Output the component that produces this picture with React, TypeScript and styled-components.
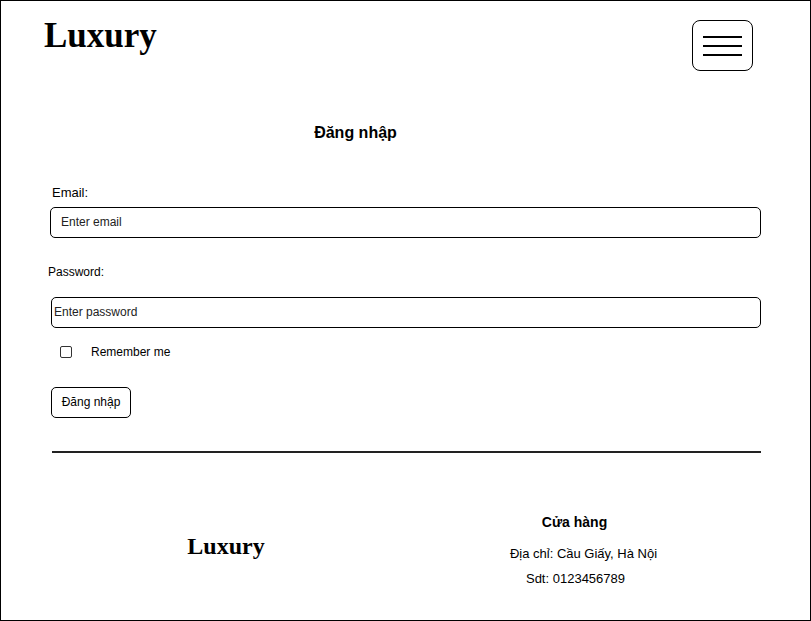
import React from "react";
import styled, { createGlobalStyle } from "styled-components";

const Global = createGlobalStyle`
  html, body { margin: 0; padding: 0; background: #fff; }
  body { font-family: "Liberation Sans", Arial, sans-serif; color: #000; }
  * { box-sizing: border-box; }
`;

const Frame = styled.div`
  width: 811px;
  height: 621px;
  border: 1px solid #000;
  display: flex;
  flex-direction: column;
  overflow: hidden;
`;

const Header = styled.header`
  display: flex;
  justify-content: space-between;
  align-items: flex-start;
  padding: 0 57px 0 43px;
`;

const Logo = styled.div<{ $size: number }>`
  font-family: "Liberation Serif", "Times New Roman", serif;
  font-weight: bold;
  font-size: ${(p) => p.$size}px;
  line-height: ${(p) => Math.round(p.$size * 1.15)}px;
`;

const HeaderLogo = styled(Logo)`
  margin-top: 15px;
`;

const MenuButton = styled.button`
  margin-top: 19px;
  width: 61px;
  height: 51px;
  border: 1px solid #000;
  border-radius: 8px;
  background: #fff;
  padding: 0;
  display: flex;
  flex-direction: column;
  align-items: center;
  justify-content: center;
  gap: 7px;
  cursor: pointer;
`;

const MenuLine = styled.span`
  display: block;
  width: 39px;
  height: 2px;
  background: #000;
`;

const Main = styled.main`
  padding: 0 49px 0 49px;
  display: flex;
  flex-direction: column;
`;

const Title = styled.h1`
  margin: 53px 0 0;
  padding-right: 100px;
  text-align: center;
  font-size: 16px;
  line-height: 18px;
  font-weight: bold;
`;

const Label = styled.label<{ $indent: number; $top: number; $size: number }>`
  display: block;
  margin-top: ${(p) => p.$top}px;
  margin-left: ${(p) => p.$indent}px;
  font-size: ${(p) => p.$size}px;
  line-height: ${(p) => p.$size + 2}px;
`;

const TextInput = styled.input<{ $indent: number; $top: number; $pad: number }>`
  display: block;
  margin-top: ${(p) => p.$top}px;
  margin-left: ${(p) => p.$indent}px;
  width: calc(100% - ${(p) => p.$indent}px);
  height: 31px;
  border: 1px solid #000;
  border-radius: 5px;
  padding: 0 ${(p) => p.$pad}px 1px;
  font-family: "Liberation Sans", Arial, sans-serif;
  font-size: 12px;
  color: #000;
  background: #fff;
  outline: none;
  &::placeholder { color: #222; opacity: 1; }
`;

const CheckRow = styled.div`
  display: flex;
  align-items: center;
  margin-top: 18px;
  padding-left: 10px;
  gap: 19px;
  font-size: 12px;
  line-height: 12px;
`;

const CheckBox = styled.input`
  appearance: none;
  margin: 0;
  width: 12px;
  height: 12px;
  border: 1px solid #333;
  border-radius: 2px;
  background: #fff;
`;

const SubmitButton = styled.button`
  margin-top: 29px;
  margin-left: 1px;
  width: 80px;
  height: 31px;
  border: 1px solid #000;
  border-radius: 5px;
  background: #fff;
  font-family: "Liberation Sans", Arial, sans-serif;
  font-size: 12px;
  color: #000;
  padding: 0 0 1px;
  align-self: flex-start;
  cursor: pointer;
`;

const Divider = styled.hr`
  margin: 33px 0 0 2px;
  border: none;
  height: 2px;
  background: #222;
`;

const Footer = styled.footer`
  display: grid;
  grid-template-columns: 348px 1fr;
  margin: 0 49px 0 51px;
  padding-top: 61px;
`;

const FooterBrand = styled.div`
  display: flex;
  justify-content: center;
  padding-top: 18px;
`;

const FooterInfo = styled.div`
  display: flex;
  flex-direction: column;
  align-items: center;
`;

const InfoLine = styled.div<{ $bold?: boolean; $shift: number; $top: number }>`
  margin-top: ${(p) => p.$top}px;
  font-size: ${(p) => (p.$bold ? 14 : 13)}px;
  line-height: ${(p) => (p.$bold ? 16 : 15)}px;
  font-weight: ${(p) => (p.$bold ? "bold" : "normal")};
  transform: translateX(${(p) => p.$shift}px);
`;

export default function App() {
  return (
    <>
      <Global />
      <Frame>
        <Header>
          <HeaderLogo $size={35}>Luxury</HeaderLogo>
          <MenuButton aria-label="menu">
            <MenuLine />
            <MenuLine />
            <MenuLine />
          </MenuButton>
        </Header>
        <Main>
          <Title>Đăng nhập</Title>
          <Label $indent={2} $top={43} $size={13} htmlFor="email">
            Email:
          </Label>
          <TextInput id="email" type="email" placeholder="Enter email" $indent={0} $top={7} $pad={10} />
          <Label $indent={-2} $top={27} $size={12} htmlFor="pwd">
            Password:
          </Label>
          <TextInput id="pwd" type="password" placeholder="Enter password" $indent={1} $top={18} $pad={2} />
          <CheckRow>
            <CheckBox type="checkbox" id="remember" />
            <label htmlFor="remember">Remember me</label>
          </CheckRow>
          <SubmitButton type="submit">Đăng nhập</SubmitButton>
          <Divider />
        </Main>
        <Footer>
          <FooterBrand>
            <Logo $size={24}>Luxury</Logo>
          </FooterBrand>
          <FooterInfo>
            <InfoLine $bold $shift={-6} $top={0}>Cửa hàng</InfoLine>
            <InfoLine $shift={3} $top={16}>Địa chỉ: Cầu Giấy, Hà Nội</InfoLine>
            <InfoLine $shift={-5} $top={10}>Sdt: 0123456789</InfoLine>
          </FooterInfo>
        </Footer>
      </Frame>
    </>
  );
}
